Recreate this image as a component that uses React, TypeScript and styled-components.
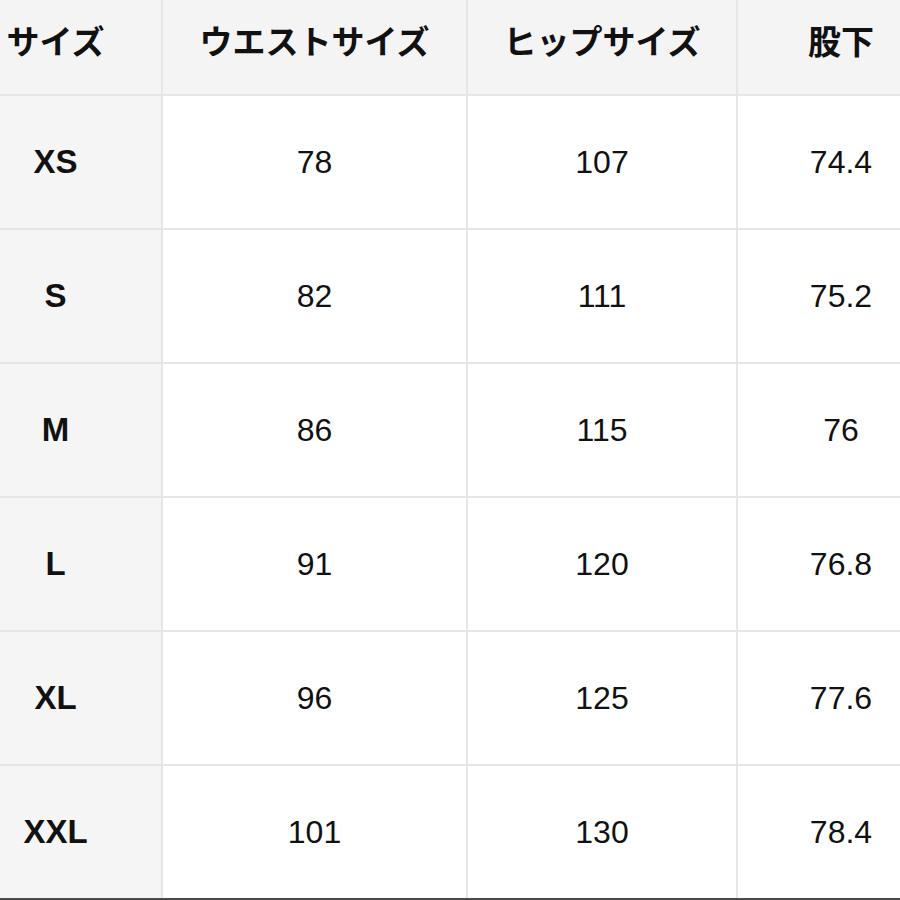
import styled, { createGlobalStyle } from 'styled-components';

const GlobalStyle = createGlobalStyle`
  html, body {
    margin: 0;
    padding: 0;
    background: #ffffff;
  }
  body {
    font-family: "Liberation Sans", Arial, "Noto Sans CJK JP", sans-serif;
    color: #111111;
  }
`;

type Col = 0 | 1 | 2 | 3;

const Table = styled.div`
  display: grid;
  grid-template-columns: 161px 303px 268px 1fr;
  grid-template-rows: 94px repeat(6, 132px);
  gap: 2px;
  width: 900px;
  height: 900px;
  box-sizing: border-box;
  background: #e6e6e6;
  border-bottom: 2px solid #4a4a4a;
  overflow: hidden;
`;

const padFor = (col: Col) => {
  if (col === 0) return 'padding-right: 50px;';
  if (col === 3) return 'padding-left: 44px;';
  return '';
};

const HeadCell = styled.div<{ $col: Col }>`
  display: flex;
  align-items: center;
  justify-content: center;
  padding-bottom: 14px;
  box-sizing: border-box;
  background: #f4f4f4;
  font-family: "Noto Sans CJK JP", "Liberation Sans", sans-serif;
  font-weight: 700;
  font-size: 33px;
  white-space: nowrap;
  ${(p) => padFor(p.$col)}
`;

const SizeCell = styled.div`
  display: flex;
  align-items: center;
  justify-content: center;
  padding-right: 50px;
  background: #f5f5f5;
  font-weight: 700;
  font-size: 33px;
`;

const ValueCell = styled.div<{ $col: Col }>`
  display: flex;
  align-items: center;
  justify-content: center;
  background: #ffffff;
  font-size: 32px;
  ${(p) => padFor(p.$col)}
`;

const headers = ['サイズ', 'ウエストサイズ', 'ヒップサイズ', '股下'];

const rows: [string, string, string, string][] = [
  ['XS', '78', '107', '74.4'],
  ['S', '82', '111', '75.2'],
  ['M', '86', '115', '76'],
  ['L', '91', '120', '76.8'],
  ['XL', '96', '125', '77.6'],
  ['XXL', '101', '130', '78.4'],
];

export default function App() {
  return (
    <>
      <GlobalStyle />
      <Table>
        {headers.map((h, i) => (
          <HeadCell key={h} $col={i as Col}>
            {h}
          </HeadCell>
        ))}
        {rows.map((r) => [
          <SizeCell key={r[0]}>{r[0]}</SizeCell>,
          ...r.slice(1).map((v, i) => (
            <ValueCell key={r[0] + i} $col={(i + 1) as Col}>
              {v}
            </ValueCell>
          )),
        ])}
      </Table>
    </>
  );
}
